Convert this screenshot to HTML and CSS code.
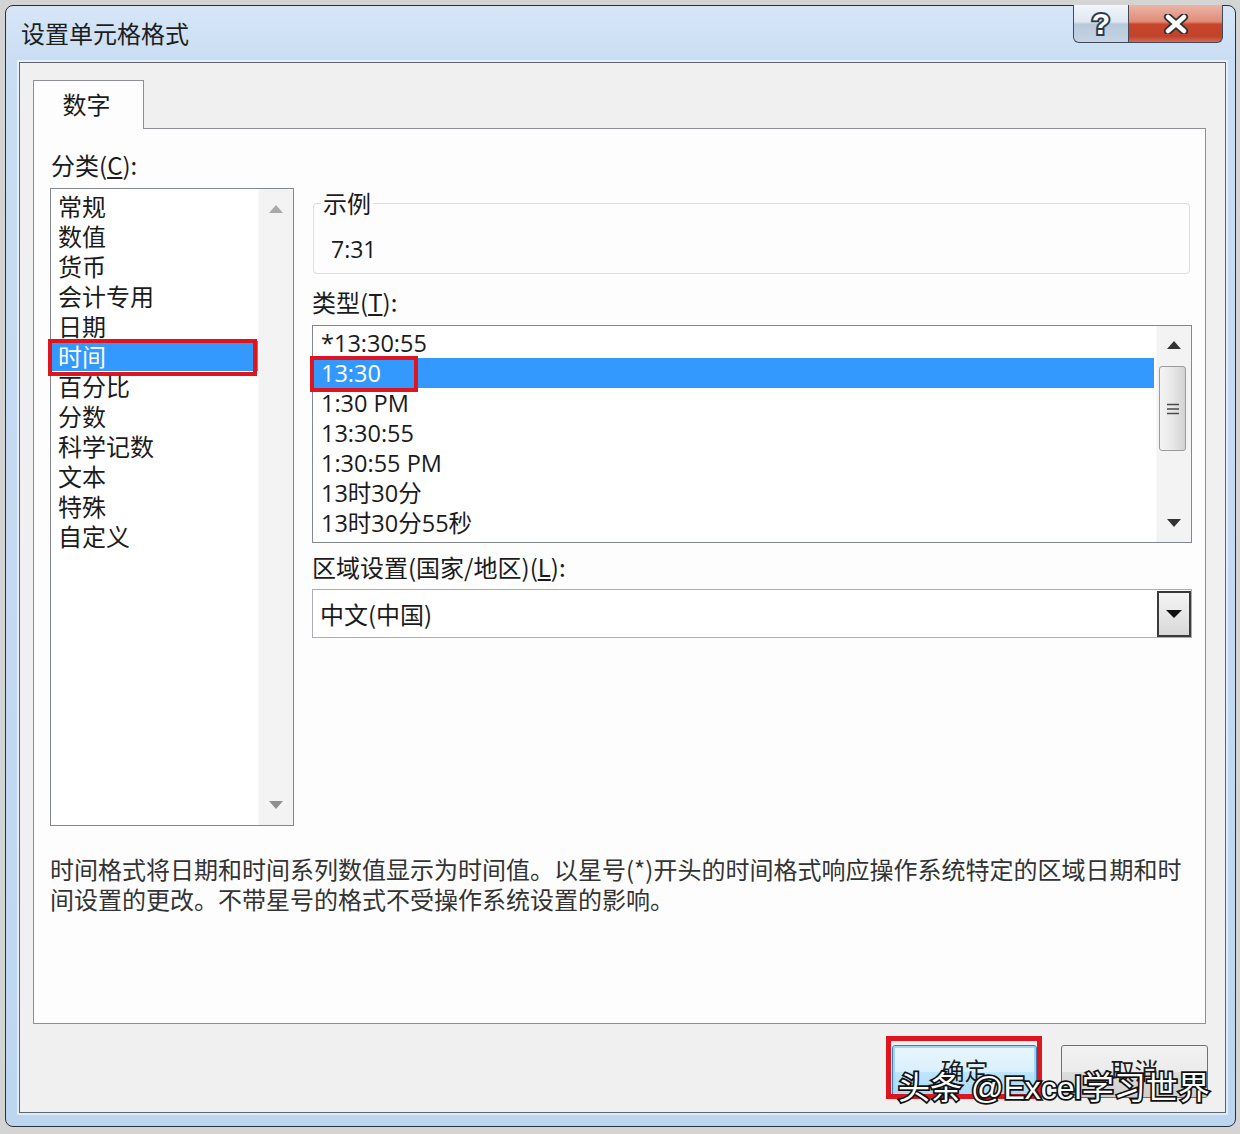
FILE: index.html
```html
<!DOCTYPE html>
<html lang="zh-CN">
<head>
    <meta charset="UTF-8">
    <title>设置单元格格式</title>
    <link rel="stylesheet" href="styles.css">
</head>
<body>
    <div class="window">
        <div class="titlebar">
            <div class="title">设置单元格格式</div>
            <div class="caption-buttons">
                <div class="cap-btn help"><span>?</span></div>
                <div class="cap-btn close">
                    <svg width="26" height="20" viewBox="0 0 26 20">
                        <path d="M5 3 L21 17 M21 3 L5 17" stroke="#2a2e36" stroke-width="8" stroke-linecap="round"/>
                        <path d="M5 3 L21 17 M21 3 L5 17" stroke="#fff" stroke-width="4.5" stroke-linecap="round"/>
                    </svg>
                </div>
            </div>
        </div>

        <div class="client">
            <div class="tabs">
                <div class="tab">数字</div>
            </div>

            <div class="panel">
                <div class="columns">
                    <!-- category list -->
                    <div class="col-left">
                        <div class="label">分类(<u>C</u>):</div>
                        <div class="listbox category">
                            <ul class="items">
                                <li>常规</li>
                                <li>数值</li>
                                <li>货币</li>
                                <li>会计专用</li>
                                <li>日期</li>
                                <li class="selected">时间<span class="mark"></span></li>
                                <li>百分比</li>
                                <li>分数</li>
                                <li>科学记数</li>
                                <li>文本</li>
                                <li>特殊</li>
                                <li>自定义</li>
                            </ul>
                            <div class="scrollbar disabled">
                                <div class="sb-btn">
                                    <svg width="14" height="8" viewBox="0 0 14 8"><path d="M0 8 L7 0 L14 8 Z" fill="#a9a9a9"/></svg>
                                </div>
                                <div class="sb-track"></div>
                                <div class="sb-btn">
                                    <svg width="14" height="8" viewBox="0 0 14 8"><path d="M0 0 L14 0 L7 8 Z" fill="#8f8f8f"/></svg>
                                </div>
                            </div>
                        </div>
                    </div>

                    <div class="col-right">
                        <fieldset class="sample">
                            <legend>示例</legend>
                            <div class="sample-value">7:31</div>
                        </fieldset>

                        <div class="label">类型(<u>T</u>):</div>
                        <div class="listbox types">
                            <ul class="items">
                                <li>*13:30:55</li>
                                <li class="selected">13:30<span class="mark"></span></li>
                                <li>1:30 PM</li>
                                <li>13:30:55</li>
                                <li>1:30:55 PM</li>
                                <li>13时30分</li>
                                <li>13时30分55秒</li>
                            </ul>
                            <div class="scrollbar">
                                <div class="sb-btn">
                                    <svg width="14" height="8" viewBox="0 0 14 8"><path d="M0 8 L7 0 L14 8 Z" fill="#333"/></svg>
                                </div>
                                <div class="sb-track">
                                    <div class="thumb">
                                        <svg width="12" height="12" viewBox="0 0 12 12">
                                            <path d="M0 1.5 H12 M0 6 H12 M0 10.5 H12" stroke="#4a4a4a" stroke-width="1.6"/>
                                        </svg>
                                    </div>
                                </div>
                                <div class="sb-btn">
                                    <svg width="14" height="8" viewBox="0 0 14 8"><path d="M0 0 L14 0 L7 8 Z" fill="#333"/></svg>
                                </div>
                            </div>
                        </div>

                        <div class="label">区域设置(国家/地区)(<u>L</u>):</div>
                        <div class="combo">
                            <span class="combo-text">中文(中国)</span>
                            <div class="combo-btn">
                                <svg width="16" height="8" viewBox="0 0 16 8"><path d="M0 0 L16 0 L8 8 Z" fill="#111"/></svg>
                            </div>
                        </div>
                    </div>
                </div>

                <p class="desc">时间格式将日期和时间系列数值显示为时间值。以星号(*)开头的时间格式响应操作系统特定的区域日期和时间设置的更改。不带星号的格式不受操作系统设置的影响。</p>
            </div>

            <div class="buttons">
                <button class="btn default">确定<span class="mark"></span></button>
                <button class="btn">取消</button>
            </div>
        </div>

        <div class="watermark">头条 @Excel学习世界</div>
    </div>
</body>
</html>
```

FILE: styles.css
```css
* {
    box-sizing: border-box;
}

body {
    margin: 0;
    background-color: #d4d4d4;
    font-family: "Noto Sans CJK SC", sans-serif;
    font-size: 24px;
    color: #1b1b1b;
}

.window {
    position: relative;
    margin: 5px 0 0 5px;
    width: 1231px;
    height: 1122px;
    border: 1px solid #2b2f36;
    border-radius: 8px;
    background: linear-gradient(to bottom, #d6e6f7 0, #c9ddf3 56px, #bdd6f0 100%);
    display: flex;
    flex-direction: column;
}

/* title bar */
.titlebar {
    height: 56px;
    display: flex;
    justify-content: space-between;
    align-items: flex-start;
    padding-left: 15px;
}

.title {
    padding-top: 12px;
    line-height: 30px;
    color: #1e1e1e;
}

.caption-buttons {
    display: flex;
    margin-top: -1px;
    margin-right: 12px;
}

.cap-btn {
    height: 38px;
    display: flex;
    align-items: center;
    justify-content: center;
    border: 1px solid #3f4a5a;
    border-top: none;
}

.cap-btn.help {
    width: 56px;
    border-radius: 0 0 0 6px;
    background: linear-gradient(to bottom, #f2f5fa 0, #dfe7f1 45%, #b9c9dc 52%, #c6d4e4 100%);
}

.cap-btn.help span {
    font-family: "Liberation Sans", sans-serif;
    font-weight: bold;
    font-size: 30px;
    line-height: 30px;
    color: #fff;
    -webkit-text-stroke: 4px #2c3a4d;
    paint-order: stroke fill;
}

.cap-btn.close {
    width: 94px;
    border-left: none;
    border-radius: 0 0 6px 0;
    background: linear-gradient(to bottom, #ecb4a6 0, #df8c77 45%, #c9452d 52%, #c0432b 85%, #d56a52 100%);
}

/* client area */
.client {
    margin: 0 9px 12px 13px;
    height: 1051px;
    border: 1px solid #5e6570;
    box-shadow: 0 0 0 2px rgba(255, 255, 255, 0.55);
    background-color: #f0f0f0;
    padding: 17px 19px 0 13px;
}

.tabs {
    height: 48px;
    display: flex;
}

.tab {
    position: relative;
    z-index: 1;
    width: 111px;
    height: 49px;
    border: 1px solid #8c8f94;
    border-bottom: none;
    background-color: #fdfdfd;
    padding-right: 4px;
    text-align: center;
    line-height: 46px;
}

.panel {
    width: 1173px;
    height: 896px;
    border: 1px solid #8c8f94;
    background-color: #fdfdfd;
    padding: 21px 13px 0 16px;
}

.columns {
    display: flex;
    align-items: flex-start;
    gap: 18px;
}

.col-left {
    width: 244px;
}

.col-left .label {
    margin-left: 1px;
}

.col-right {
    width: 880px;
    padding-top: 38px;
}

.label {
    height: 30px;
    line-height: 30px;
}

/* list boxes */
.listbox {
    display: flex;
    margin-top: 8px;
    border: 1px solid #828790;
    background-color: #fff;
}

.listbox.category {
    height: 638px;
}

.listbox.types {
    height: 218px;
}

.items {
    flex: 1;
    list-style: none;
    margin: 0;
    padding: 2px 0 0 0;
}

.items li {
    position: relative;
    height: 30px;
    line-height: 30px;
    padding-left: 7px;
    white-space: nowrap;
}

.types .items li {
    font-family: "Open Sans", "Noto Sans CJK SC", sans-serif;
    font-size: 23.5px;
    padding-left: 8px;
}

.items li.selected {
    background-color: #3399ff;
    color: #fff;
}

.types .items li.selected {
    margin: 0 2px 0 1px;
    padding-left: 7px;
}

.scrollbar {
    width: 35px;
    display: flex;
    flex-direction: column;
    background-color: #f3f3f3;
    border-left: 1px solid #f9f9f9;
}

.sb-btn {
    height: 40px;
    display: flex;
    align-items: center;
    justify-content: center;
}

.types .sb-btn {
    height: 38px;
}

.sb-track {
    flex: 1;
}

.thumb {
    margin: 2px 5px 0 2px;
    height: 85px;
    border: 1px solid #9b9b9b;
    border-radius: 3px;
    background: linear-gradient(to right, #f4f4f4, #e8e8e8 50%, #d2d2d2);
    display: flex;
    align-items: center;
    justify-content: center;
}

/* red annotation boxes */
.mark {
    position: absolute;
    border: 4px solid #e0141e;
    pointer-events: none;
}

.category .mark {
    left: -3px;
    top: -2px;
    width: 209px;
    height: 37px;
}

.types .mark {
    left: -4px;
    top: -2px;
    width: 108px;
    height: 36px;
}

/* sample group */
.sample {
    margin: 0 2px 0 1px;
    border: 1px solid #d5dfe5;
    border-radius: 4px;
    padding: 0 17px 9px;
}

.sample legend {
    padding: 0 2px;
    margin-left: -10px;
    line-height: 30px;
}

.sample-value {
    margin-top: 16px;
    line-height: 30px;
    font-family: "Open Sans", sans-serif;
    font-size: 23px;
}

.sample + .label {
    margin-top: 13px;
}

.types + .label {
    margin-top: 9px;
}

/* combo box */
.combo {
    margin-top: 7px;
    height: 49px;
    display: flex;
    align-items: flex-start;
    justify-content: space-between;
    border: 1px solid #abadb3;
    background-color: #fff;
    padding-left: 7px;
}

.combo-text {
    line-height: 47px;
}

.combo-btn {
    width: 34px;
    height: 46px;
    margin-top: 1px;
    border: 2px solid #3a3a3a;
    background: linear-gradient(to bottom, #f5f5f5, #d8d8d8);
    display: flex;
    align-items: center;
    justify-content: center;
}

.desc {
    margin: 28px 0 0 0;
    width: 1150px;
    line-height: 30px;
    color: #333;
}

/* bottom buttons */
.buttons {
    display: flex;
    justify-content: flex-end;
    gap: 24px;
    margin-top: 21px;
    margin-right: -2px;
}

.btn {
    position: relative;
    width: 147px;
    height: 53px;
    padding: 0 0 4px 0;
    border: 1px solid #707070;
    border-radius: 3px;
    background: linear-gradient(to bottom, #f2f2f2 0, #ebebeb 50%, #dddddd 51%, #cfcfcf 100%);
    font-family: "Noto Sans CJK SC", sans-serif;
    font-size: 24px;
    color: #1b1b1b;
}

.btn.default {
    width: 145px;
    border-color: #3c7fb1;
    box-shadow: inset 0 0 0 2px #9fd7f5;
    background: linear-gradient(to bottom, #eaf6fd 0, #d9f0fc 50%, #bee6fd 51%, #a7d9f5 100%);
}

.btn .mark {
    left: -7px;
    top: -10px;
    width: 156px;
    height: 63px;
    border-width: 5px;
}

.watermark {
    position: absolute;
    left: 892px;
    top: 1062px;
    font-family: "Liberation Sans", "Noto Sans CJK SC", sans-serif;
    font-size: 32px;
    line-height: 40px;
    color: #fff;
    white-space: nowrap;
    -webkit-text-stroke: 3.5px #111;
    paint-order: stroke fill;
}
```
